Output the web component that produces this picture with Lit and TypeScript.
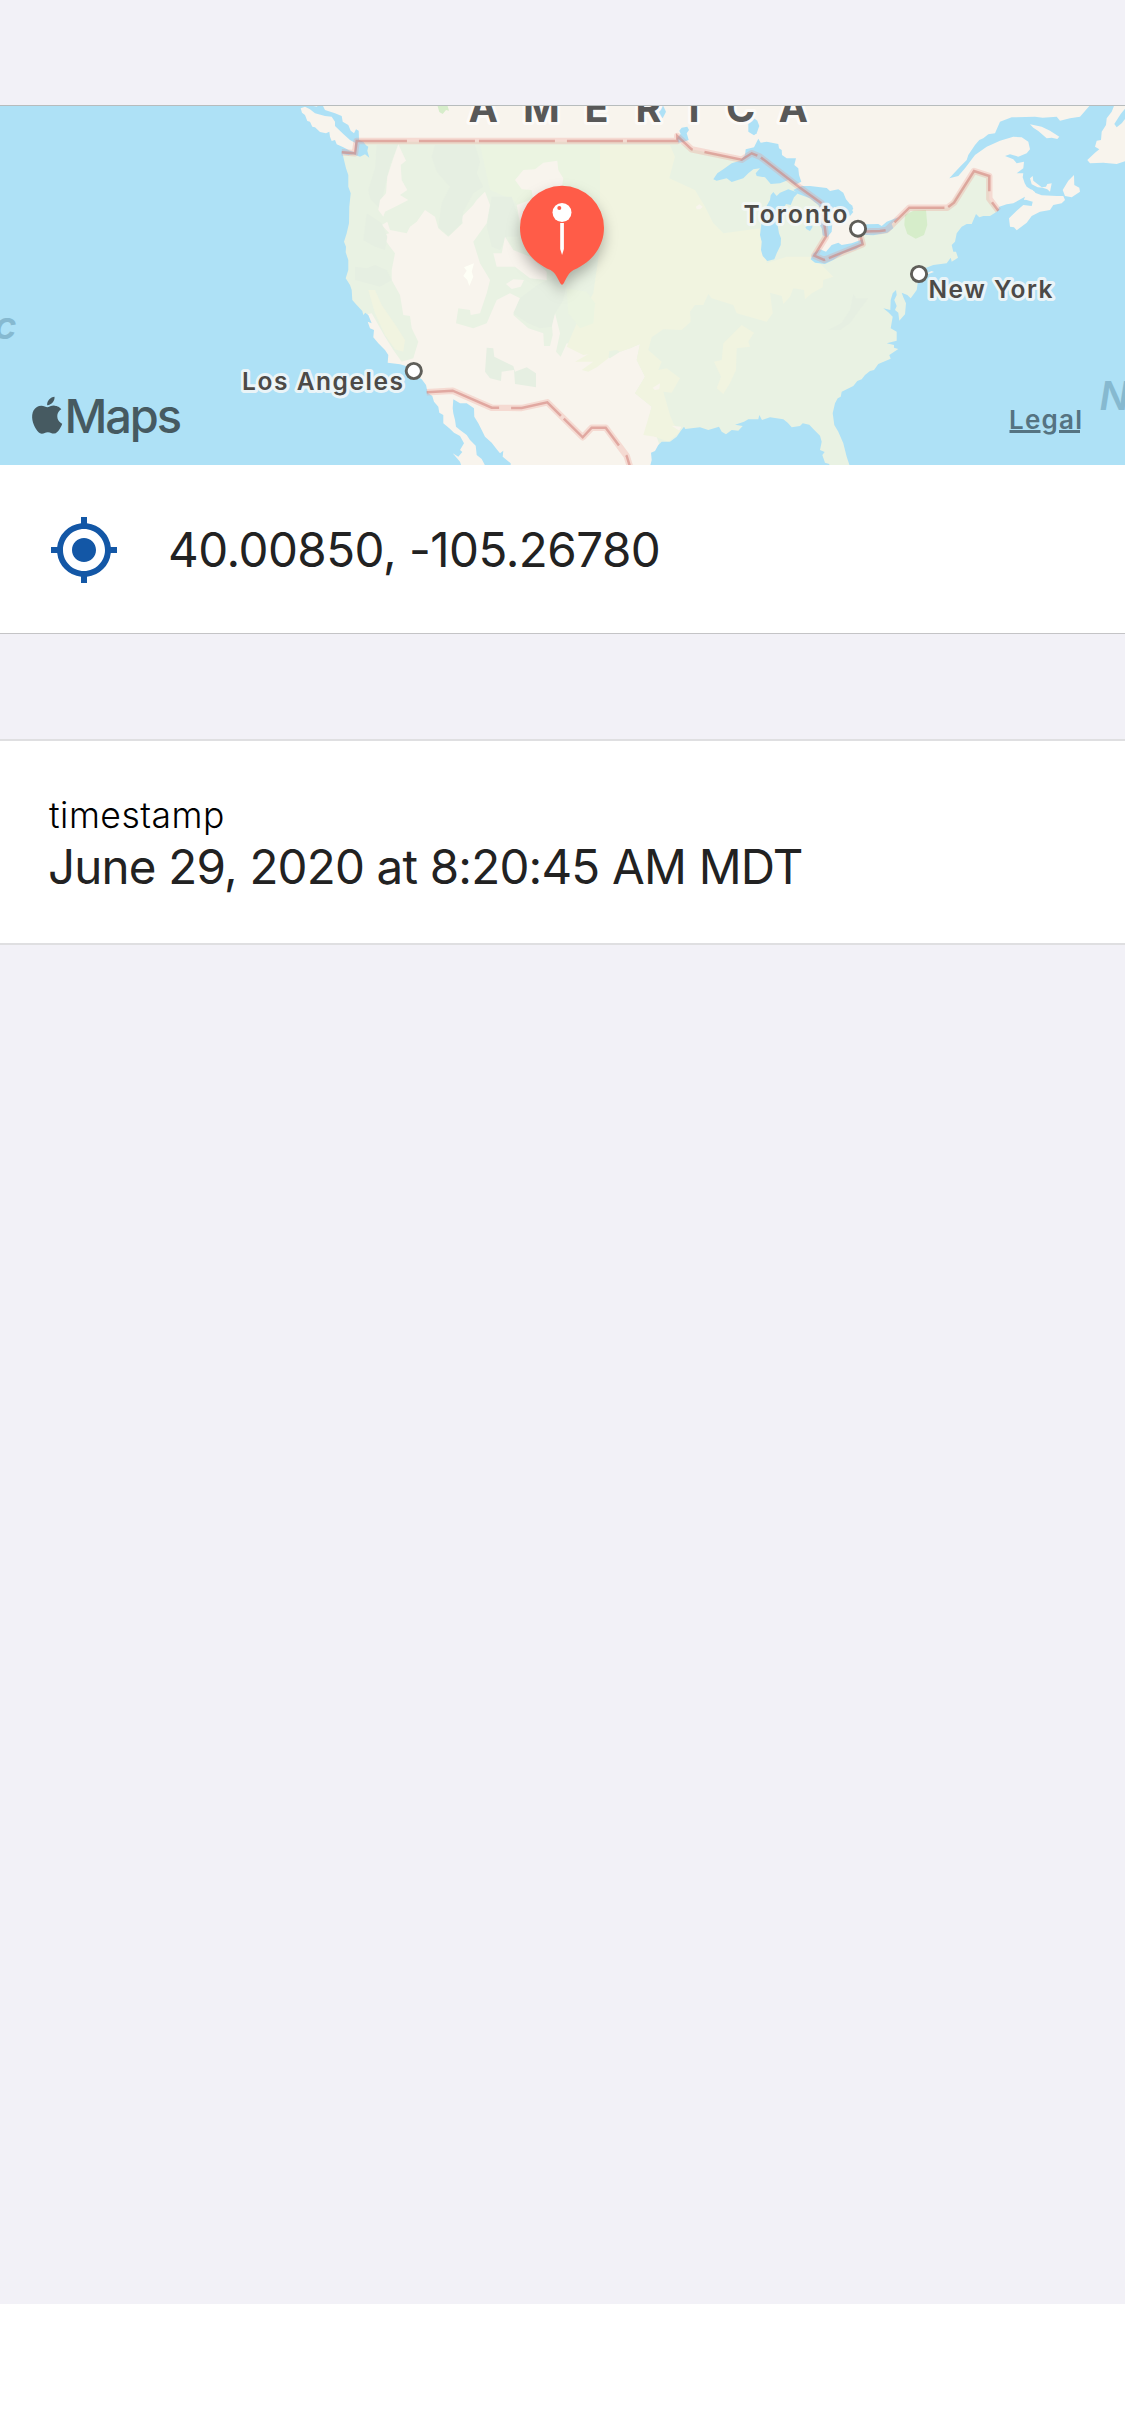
import { LitElement, html, svg, css } from "lit";
import { customElement } from "lit/decorators.js";

/** A run of outline points: tile origin in px, then points in thirds of a pixel. */
type Run = [number, number, number[]];

const points = (...runs: Run[]): string =>
  runs
    .map(([ox, oy, p]) => {
      const out: string[] = [];
      for (let i = 0; i < p.length; i += 2) {
        out.push(`${(ox + p[i] / 3).toFixed(1)},${(oy + p[i + 1] / 3).toFixed(1)}`);
      }
      return out.join(" ");
    })
    .join(" ");

const NW = (p: number[]): Run => [300, 90, p];
const SW = (p: number[]): Run => [300, 280, p];
const NC = (p: number[]): Run => [580, 90, p];
const MID = (p: number[]): Run => [400, 180, p];
const SE = (p: number[]): Run => [620, 280, p];
const NE = (p: number[]): Run => [850, 90, p];

const water = [
  // Pacific
  points(
    NW([-905, 40, 65, 40, 75, 60, 105, 70, 125, 78, 128, 95, 145, 105, 152, 122, 162, 130, 168, 118, 176, 122, 177, 150, 190, 155, 198, 166, 205, 170, 202, 182, 208, 203, 195, 193, 180, 200, 160, 193, 145, 196, 128, 192, 132, 210, 138, 235, 145, 255, 145, 290, 152, 310, 148, 350, 147, 400, 140, 430, 132, 455, 138, 470, 137, 487, 145, 510, 145, 540, 137, 565]),
    SW([150, 15, 155, 30, 157, 60, 170, 75, 187, 93, 190, 105, 196, 98, 205, 105, 215, 130, 203, 125, 210, 145, 222, 150, 220, 172, 235, 190, 255, 210, 265, 225, 263, 248, 300, 253, 318, 258, 345, 285, 365, 298, 378, 315, 383, 338, 397, 348, 402, 365, 415, 380, 418, 398, 430, 405, 430, 430, 448, 445, 462, 458, 480, 468, 492, 490, 480, 510, 487, 516, 475, 530, 458, 520, 480, 545, 485, 560, -905, 560]),
  ),
  // Gulf of California
  points(SW([460, 358, 480, 370, 500, 370, 522, 385, 523, 410, 535, 430, 545, 450, 555, 470, 575, 488, 590, 508, 600, 520, 610, 512, 608, 530, 632, 550, 632, 560, 557, 560, 545, 537, 530, 525, 527, 497, 510, 480, 500, 465, 480, 450, 468, 440, 465, 420, 460, 400, 458, 385])),
  // Gulf of Mexico
  points(SE([90, 560, 95, 540, 93, 518, 105, 513, 115, 495, 125, 485, 150, 485, 170, 470, 182, 453, 192, 440, 196, 447, 240, 442, 265, 450, 297, 440, 305, 455, 318, 463, 335, 450, 355, 452, 368, 438, 345, 434, 372, 425, 385, 418, 415, 418, 418, 405, 426, 420, 450, 412, 490, 418, 503, 428, 515, 442, 540, 438, 548, 430, 568, 434, 580, 447, 600, 467, 605, 485, 600, 510, 614, 516, 607, 525, 615, 548, 628, 552, 628, 560])),
  // Atlantic and the Gulf of St. Lawrence
  points(
    SE([690, 560, 680, 530, 670, 490, 655, 455, 643, 435, 638, 400, 645, 370, 653, 355, 662, 350, 665, 335, 700, 318, 712, 303, 725, 298, 735, 285, 750, 273, 762, 270, 775, 252, 812, 236, 808, 225, 835, 207, 822, 203, 822, 195, 800, 190, 830, 182, 830, 155, 812, 145, 818, 110, 805, 97, 790, 85, 811, 90, 812, 60, 818, 40, 828, 30, 830, 45, 823, 60, 830, 78, 825, 90, 835, 98, 838, 122, 855, 103, 858, 70, 850, 52, 845, 38, 862, 45, 872, 55, 890, 30, 893, 10]),
    NE([202, 580, 205, 560, 225, 535, 250, 525, 290, 520, 302, 503, 305, 515, 324, 503, 318, 485, 310, 485, 305, 465, 315, 455, 320, 430, 335, 410, 350, 402, 365, 402, 378, 372, 388, 382, 400, 378, 420, 378, 440, 365, 448, 350, 470, 343, 490, 340, 525, 320, 522, 330, 545, 325, 556, 307, 530, 290, 524, 280, 518, 262, 520, 250, 500, 250, 520, 235, 522, 215, 500, 220, 490, 208, 465, 198, 480, 193, 505, 200, 530, 190, 540, 178, 535, 155, 515, 142, 490, 140, 450, 152, 410, 170, 375, 195, 345, 235, 325, 258, 298, 265, 330, 230, 350, 210, 355, 195, 375, 165, 388, 150, 400, 145, 415, 133, 435, 130, 450, 95, 485, 82, 555, 80, 578, 83, 620, 80, 630, 92, 660, 85, 690, 80, 725, 40, 795, 40, 785, 65, 770, 85, 768, 105, 755, 125, 753, 150, 740, 152, 735, 170, 748, 178, 735, 188, 712, 210, 720, 220, 760, 218, 800, 222, 830, 212, 830, 1130]),
  ),
  points(NE([830, 50, 812, 72, 793, 102, 800, 112, 815, 100, 830, 80])),
  // Superior
  points(NC([400, 268, 412, 250, 430, 238, 455, 220, 480, 212, 495, 195, 497, 178, 522, 172, 535, 146, 542, 158, 560, 155, 595, 162, 597, 175, 605, 180, 606, 195, 620, 205, 648, 205, 643, 225, 655, 235, 657, 255, 664, 275, 645, 285, 625, 270, 600, 280, 572, 282, 555, 262, 530, 258, 527, 250, 540, 235, 520, 238, 505, 250, 490, 265, 455, 276, 440, 265, 410, 272])),
  // Michigan
  points(NC([545, 395, 553, 360, 570, 330, 572, 316, 580, 306, 590, 318, 600, 308, 625, 298, 655, 308, 642, 322, 632, 345, 618, 342, 605, 365, 592, 400, 597, 430, 603, 445, 602, 465, 590, 490, 583, 508, 562, 513, 548, 498, 543, 480, 545, 455, 540, 435])),
  // Huron
  points(NC([640, 300, 665, 288, 690, 288, 740, 294, 750, 303, 775, 298, 790, 308, 798, 328, 820, 355, 810, 375, 800, 385, 780, 360, 762, 350, 745, 380, 757, 400, 755, 425, 742, 442, 728, 436, 725, 415, 715, 400, 735, 375, 715, 345, 690, 325, 655, 312])),
  points(NC([676, 412, 690, 402, 698, 410, 690, 423, 680, 418])),
  // Erie
  points(NC([692, 508, 700, 490, 720, 478, 738, 485, 755, 465, 775, 458, 785, 465, 815, 460, 848, 448, 850, 462, 828, 478, 790, 490, 760, 510, 735, 522, 705, 518])),
  // Ontario
  points(NE([30, 412, 50, 403, 85, 402, 95, 408, 110, 395, 145, 382, 125, 402, 130, 415, 112, 428, 70, 436, 35, 434])),
  points(NE([0, 342, 8, 348, 4, 358, 10, 366, 0, 378])),
  // Lake of the Woods, Nipigon, Winnipeg
  points(NC([290, 145, 302, 132, 298, 122, 305, 113, 322, 110, 327, 120, 320, 130, 326, 150, 310, 156, 295, 158])),
  points(NC([505, 98, 512, 88, 518, 82, 532, 92, 538, 108, 530, 130, 522, 136, 505, 125])),
  points(NC([235, 50, 250, 48, 258, 65, 248, 85, 238, 78, 228, 70])),
];

const islands = [
  points(NW([2, 55, 15, 50, 30, 58, 45, 70, 75, 78, 95, 80, 105, 95, 105, 108, 130, 132, 150, 150, 165, 158, 165, 187, 150, 182, 130, 172, 110, 163, 105, 150, 95, 153, 90, 140, 88, 125, 78, 130, 60, 126, 45, 112, 37, 110, 30, 95, 22, 93, 15, 75, 6, 68])),
  points(NW([28, 44, 50, 44, 52, 50, 40, 48])),
  points(NE([540, 103, 575, 110, 600, 122, 628, 140, 622, 147, 605, 143, 590, 145, 565, 123, 550, 113])),
  points(NE([540, 265, 548, 258, 550, 272, 575, 292, 588, 290, 592, 282, 605, 280, 600, 305, 592, 298, 578, 293, 563, 292, 545, 283])),
  points(NE([522, 328, 535, 315, 545, 298, 555, 308, 575, 316, 620, 318, 640, 318, 645, 330, 635, 340, 610, 345, 600, 360, 570, 365, 545, 378, 530, 398, 500, 421, 492, 412, 480, 410, 477, 385, 500, 362, 520, 345, 545, 348, 548, 335])),
  points(NE([638, 300, 655, 272, 672, 255, 673, 285, 688, 293, 690, 305, 665, 322, 645, 318])),
  points(NE([230, 550, 245, 543, 252, 546, 235, 552])),
];

const green = [
  points(
    NW([170, 155, 1130, 155]),
    NC([292, 155, 335, 178, 430, 197, 480, 210, 515, 190, 725, 340, 738, 440, 700, 497, 732, 510, 848, 460, 835, 425, 900, 420]),
    NE([110, 420, 178, 353, 292, 353, 372, 242, 418, 258, 418, 328, 445, 362, 600, 500, 200, 700]),
    SE([900, 300, 700, 560, 140, 560, 110, 470, 75, 462, 95, 380, 45, 340, 75, 290, 50, 240, 60, 192, 30, 205, 0, 215]),
    SW([930, 235, 850, 200, 800, 190, 782, 230, 768, 215, 780, 160, 765, 100, 755, 125, 758, 165, 750, 198, 732, 198, 730, 160, 685, 145, 640, 105, 660, 55, 630, 40, 590, 60, 560, 130, 520, 145, 468, 130, 475, 85, 510, 90, 512, 105, 540, 100, 560, 40, 570, 0]),
    NW([540, 520, 520, 455, 560, 400, 570, 345, 555, 305, 530, 330, 520, 345, 485, 380, 488, 400, 445, 440, 415, 415, 405, 380, 375, 360, 350, 395, 330, 410, 320, 430, 270, 420, 262, 395, 245, 405, 268, 430, 245, 435, 270, 470, 285, 490, 275, 540, 275, 570]),
    SW([300, 45, 310, 105, 330, 108, 335, 145, 355, 185, 340, 235, 305, 245, 280, 210, 255, 170, 215, 100, 190, 105, 100, 0]),
    NW([100, 500, 100, 155]),
  ),
];

const deep = [
  points(NW([230, 165, 295, 162, 270, 225, 255, 290, 240, 355, 210, 325, 205, 300, 225, 235])),
  points(NW([405, 165, 525, 165, 540, 215, 530, 250, 550, 290, 520, 310, 490, 365, 485, 400, 445, 438, 415, 410, 425, 340, 450, 290, 410, 245, 395, 200])),
  points(NW([200, 370, 245, 400, 262, 440, 255, 480, 225, 470, 190, 450])),
  points(NW([165, 530, 200, 535, 225, 525, 260, 540, 275, 570, 240, 590, 165, 570])),
  points(NW([575, 320, 635, 320, 655, 380, 655, 440, 620, 440, 600, 480, 575, 470, 560, 410])),
  points(SW([660, 55, 720, 10, 770, -10, 800, 10, 790, 60, 765, 100, 755, 140, 720, 145, 685, 130, 640, 100])),
  points(SW([560, 203, 580, 205, 583, 230, 640, 258, 645, 275, 680, 262, 708, 280, 708, 322, 685, 318, 645, 312, 642, 270, 605, 275, 603, 303, 570, 295, 555, 275])),
  points(SE([700, 42, 708, 55, 745, 55, 718, 90, 690, 130, 660, 150, 625, 150, 665, 128, 690, 90])),
];

const cream = [
  points(NW([295, 163, 318, 212, 302, 225, 305, 270, 322, 300, 300, 315, 325, 330, 290, 348, 255, 365, 250, 380, 235, 360, 240, 330, 258, 310, 262, 260, 280, 205])),
  points(NW([645, 270, 670, 240, 705, 238, 730, 218, 772, 212, 775, 240, 790, 265, 780, 330, 700, 340, 695, 300, 665, 298])),
  points(NW([650, 345, 690, 330, 700, 400, 660, 400])),
  points(NW([615, 440, 640, 480, 690, 500, 740, 545, 740, 570, 690, 565, 645, 530, 590, 530, 580, 490, 605, 490])),
  points(MID([318, 312, 340, 298, 372, 300, 362, 320, 335, 327])),
  points(NC([348, 350, 358, 343, 368, 350, 360, 358, 350, 358])),
  points(SE([98, 323, 120, 310, 118, 328, 104, 330])),
  points(SE([155, 437, 184, 440, 178, 452])),
];

const plains = [
  points(
    NC([60, 165, 270, 165, 285, 200, 268, 265, 345, 300, 375, 350, 400, 400, 430, 430, 540, 415, 560, 520, 620, 500, 700, 500, 760, 560]),
    SE([610, 0, 608, 22, 575, 40, 555, 58, 552, 30, 520, 25, 510, 50, 490, 72, 485, 48, 450, 38, 458, 100, 440, 125, 350, 100, 340, 75, 275, 55, 265, 42, 250, 75, 225, 75, 210, 95, 212, 125, 185, 150, 130, 148, 95, 172, 85, 210, 125, 245, 115, 270, 140, 265, 180, 295, 155, 338, 130, 335, 150, 405, 160, 430, 180, 455, 145, 485, 105, 470, 70, 465, 95, 380, 45, 340, 75, 290, 50, 240, 60, 192, 30, 205, 0, 215]),
    SW([950, 210, 850, 225, 800, 200, 830, 130, 880, 40]),
    NW([900, 470, 900, 160]),
  ),
  points(SE([365, 135, 402, 158, 385, 185, 390, 200, 350, 205, 348, 270, 330, 310, 310, 342, 290, 325, 303, 290, 282, 245, 305, 240, 310, 190])),
  points(SW([205, 30, 225, 30, 245, 75, 290, 140, 315, 180, 310, 215, 285, 208, 255, 165, 225, 100])),
  points(SW([825, 245, 870, 220, 930, 200, 925, 235, 890, 262, 865, 275, 845, 270, 880, 245])),
];

const mint = [
  points(NW([540, 165, 980, 165, 960, 300, 950, 420, 800, 560, 700, 400, 640, 330, 570, 300])),
  points(MID([500, 325, 560, 335, 585, 370, 580, 430, 540, 445, 505, 400])),
];

const borders = [
  points(NW([125, 187, 165, 190, 170, 153, 1132, 153]), NC([292, 138, 335, 178, 485, 209, 515, 190, 540, 200, 660, 293, 725, 340, 738, 440, 703, 497, 732, 510, 848, 463, 838, 425, 900, 423]), NE([110, 420, 178, 353, 292, 353, 312, 338, 372, 243, 418, 258, 418, 326, 445, 362])),
  points(SW([380, 337, 458, 332, 575, 383, 665, 384, 742, 367, 848, 472, 875, 443, 917, 443, 980, 528, 990, 560])),
];

const poly = (p: string) => svg`<polygon points=${p}></polygon>`;
const city = (x: number, y: number) => svg`<circle class="city" cx=${x} cy=${y} r="7.6"></circle>`;

@customElement("location-map")
export class LocationMap extends LitElement {
  static styles = css`
    :host { display: block; height: 360px; }
    svg { display: block; width: 100%; height: 100%; background: #f8f4ed; }
    text { font-family: Inter, "Liberation Sans", sans-serif; }
    .green { fill: #e9f2e3; }
    .deep { fill: #e6efe2; }
    .cream { fill: #f8f4ed; }
    .plains { fill: #f1f4e0; }
    .mint { fill: #ebf4e1; }
    .water { fill: #aee1f6; }
    .park { fill: #d6edca; }
    .salt { fill: #fefff6; }
    .border-glow { fill: none; stroke: #ee9488; stroke-opacity: 0.27; stroke-width: 6.4; stroke-linejoin: round; }
    .border-line { fill: none; stroke: #d08078; stroke-opacity: 0.55; stroke-width: 2.5; stroke-dasharray: 76 12 56 4; }
    .city { fill: #fff; stroke: #5f5e59; stroke-width: 2.9; }
    .place { font-size: 24.5px; font-weight: 600; fill: #4c4a47; stroke: #f6f8f8; stroke-opacity: 0.85; stroke-width: 6px; stroke-linejoin: round; paint-order: stroke; }
    .country { font-size: 39.5px; font-weight: 700; fill: #585858; stroke: #fcfaf7; stroke-width: 6px; stroke-linejoin: round; paint-order: stroke; }
    .sea { font-size: 39px; font-weight: 600; font-style: italic; fill: #86b9d0; }
    .brand { font-size: 47px; font-weight: 500; fill: #465a61; }
    .apple { fill: #465a61; }
    .legal { font-size: 26px; font-weight: 600; fill: #557381; }
    .legal-line { fill: #557381; }
    .pin { fill: #ff5c48; filter: drop-shadow(0 7px 7px rgba(0, 0, 0, 0.28)); }
    .pin-glyph { fill: #fff; }
    .pin-dot { fill: #ff5c48; }
    .edge { fill: #b7bcbd; }
  `;

  render() {
    return html`
      <svg viewBox="0 105 1125 360" preserveAspectRatio="none">
        <g class="green">${green.map(poly)}</g>
        <g class="mint">${poly(mint[0])}</g>
        <g class="plains">${plains.map(poly)}</g>
        <g class="mint">${poly(mint[1])}</g>
        <g class="deep">${deep.map(poly)}</g>
        <g class="cream">${cream.map(poly)}</g>
        <polygon class="salt" points=${points(MID([192, 262, 222, 250, 215, 275, 220, 290, 208, 318, 202, 300, 190, 288, 200, 272]))}></polygon>
        <polygon class="park" points=${points(NE([165, 375, 190, 362, 228, 360, 232, 405, 222, 435, 197, 446, 172, 432, 163, 405]))}></polygon>
        <polygon class="park" points=${points(NW([412, 45, 442, 45, 447, 62, 438, 60, 428, 72, 418, 66]))}></polygon>
        <g class="water">${water.map(poly)}</g>
        <g class="cream">${islands.map(poly)}</g>
        ${borders.map((b) => svg`
          <polyline class="border-glow" points=${b}></polyline>
          <polyline class="border-line" points=${b}></polyline>`)}

        <text class="country" x="468.5 523 584.5 635.5 688.5 726 778.5" y="121.7">AMERICA</text>
        <text class="sea" x="-6" y="338.5">c</text>
        <text class="sea" x="1099.500" y="410">N</text>

        <text class="place" x="242" y="390.3" textLength="161">Los Angeles</text>
        <text class="place" x="743.500" y="222.7" textLength="104">Toronto</text>
        <text class="place" x="928.5" y="297.7" textLength="124">New York</text>
        ${city(413.8, 371)}${city(858, 228.7)}${city(919, 274)}

        <path class="pin" d="M562 185.7a42 42 0 0 1 42 42c0 18-11 34-30.500 42.300-5 3-7 8-9.500 12.700q-2 4-4 0c-2.500-4.700-4.500-9.700-9.500-12.700C531 261.700 520 245.700 520 227.700a42 42 0 0 1 42-42z"></path>
        <circle class="pin-glyph" cx="562" cy="212.500" r="9.500"></circle>
        <path class="pin-glyph" d="M560.200 223h3.700v26l-1.800 6-1.900-6z"></path>
        <circle class="pin-dot" cx="559.300" cy="208" r="2"></circle>

        <path class="apple" transform="translate(28.700 396.700) scale(1.540)" d="M12.152 6.896c-.948 0-2.415-1.078-3.960-1.040-2.040.027-3.910 1.183-4.961 3.014-2.117 3.675-.546 9.103 1.519 12.090 1.013 1.454 2.208 3.090 3.792 3.039 1.520-.065 2.090-.987 3.935-.987 1.831 0 2.350.987 3.960.948 1.637-.026 2.676-1.480 3.676-2.948 1.156-1.688 1.636-3.325 1.662-3.415-.039-.013-3.182-1.221-3.220-4.857-.026-3.040 2.480-4.494 2.597-4.559-1.429-2.090-3.623-2.324-4.390-2.376-2-.156-3.675 1.090-4.610 1.090zM15.530 3.830c.843-1.012 1.400-2.427 1.245-3.830-1.207.052-2.662.805-3.532 1.818-.780.896-1.454 2.338-1.273 3.714 1.338.104 2.715-.688 3.559-1.701"></path>
        <text class="brand" x="64.500" y="432.700" textLength="117.500">Maps</text>
        <text class="legal" x="1009" y="428.700" textLength="73">Legal</text>
        <path class="legal-line" d="M1009.500 430h31v3h-31zM1059 430h21v3h-21z"></path>
        <rect class="edge" x="0" y="105" width="1125" height="1"></rect>
      </svg>
    `;
  }
}

@customElement("app-root")
export class AppRoot extends LitElement {
  static styles = css`
    :host {
      display: flex;
      flex-direction: column;
      box-sizing: border-box;
      height: 2436px;
      padding-top: 105px;
      background: #f2f1f7;
      color: #222;
      font-family: Inter, "Liberation Sans", sans-serif;
    }
    .coordinates {
      display: flex;
      align-items: center;
      gap: 48px;
      height: 169px;
      box-sizing: border-box;
      padding: 2px 0 0 48px;
      background: #fff;
      border-bottom: 1px solid #c4c4c6;
    }
    .gps { width: 72px; height: 72px; fill: #1357a6; }
    .value { font-size: 47.500px; line-height: 58px; white-space: nowrap; }
    .coordinates .value { letter-spacing: -0.500px; }
    .details {
      display: flex;
      flex-direction: column;
      justify-content: center;
      box-sizing: border-box;
      height: 206px;
      margin-top: 105px;
      padding: 5px 0 0 48px;
      background: #fff;
      border-top: 2px solid #dfdfe1;
      border-bottom: 2px solid #dfdfe1;
    }
    .details .value { letter-spacing: -0.800px; }
    .label { padding-left: 1px; font-size: 35.500px; line-height: 45px; font-weight: 300; letter-spacing: 0.500px; color: #000; }
    .footer { height: 132px; margin-top: auto; background: #fff; }
  `;

  render() {
    return html`
      <location-map></location-map>
      <div class="coordinates">
        <svg class="gps" viewBox="0 0 24 24">
          <path d="M12 8c-2.210 0-4 1.790-4 4s1.790 4 4 4 4-1.790 4-4-1.790-4-4-4zm8.940 3A8.994 8.994 0 0 0 13 3.060V1h-2v2.060A8.994 8.994 0 0 0 3.060 11H1v2h2.060A8.994 8.994 0 0 0 11 20.940V23h2v-2.060A8.994 8.994 0 0 0 20.940 13H23v-2h-2.060zM12 19c-3.870 0-7-3.130-7-7s3.130-7 7-7 7 3.130 7 7-3.130 7-7 7z"></path>
        </svg>
        <span class="value">40.00850, -105.26780</span>
      </div>
      <div class="details">
        <span class="label">timestamp</span>
        <span class="value">June 29, 2020 at 8:20:45 AM MDT</span>
      </div>
      <div class="footer"></div>
    `;
  }
}
